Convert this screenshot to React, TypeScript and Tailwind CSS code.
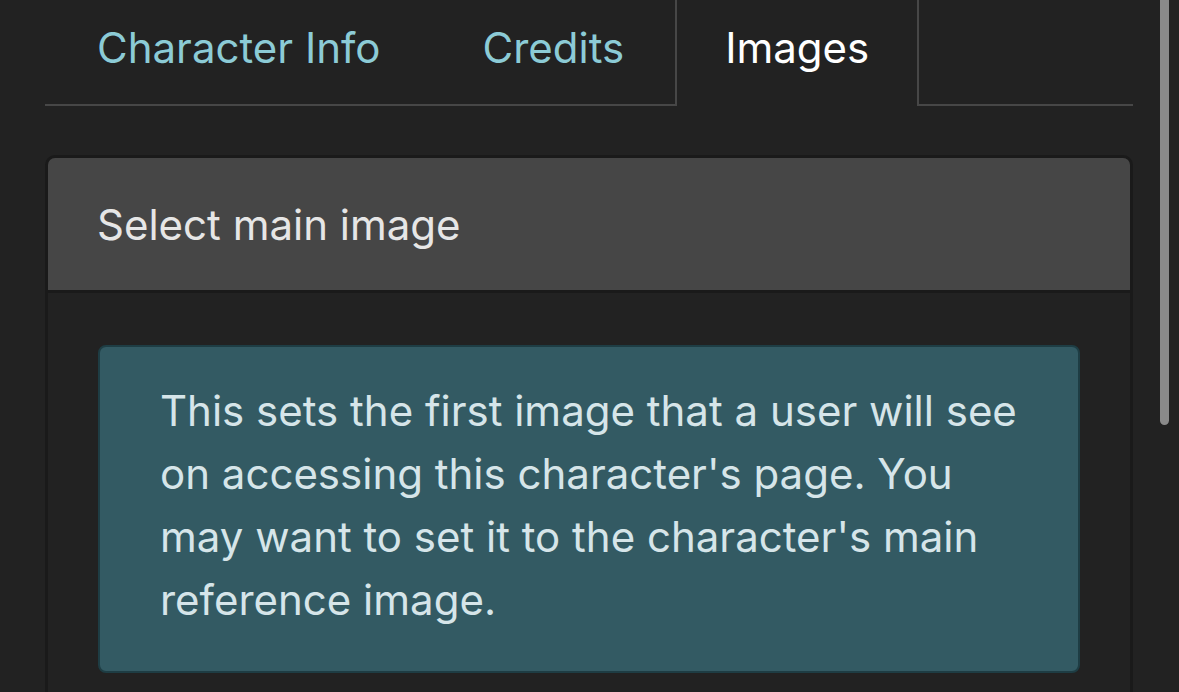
export default function App() {
  const font = { fontFamily: "Inter, 'Noto Sans', sans-serif" };
  return (
    <div className="relative w-[1179px] h-[692px] overflow-hidden bg-[#222222]" style={font}>
      <div className="pl-[45px] pr-[46px]">
        <div className="flex items-end h-[106px] border-b-2 border-[#474747]">
          <div className="pl-[52px] pr-[51px] h-[104px] flex items-start pt-[20px] text-[42px] leading-[56px] text-[#8ccbd6]">Character Info</div>
          <div className="pl-[51px] pr-[51px] h-[104px] flex items-start pt-[20px] text-[42px] leading-[56px] text-[#8ccbd6]">Credits</div>
          <div className="relative px-[48px] h-[106px] -mb-[2px] flex items-start pt-[20px] text-[42px] leading-[56px] text-white border-x-2 border-[#474747] bg-[#222222]">Images</div>
        </div>
        <div className="mt-[49px] rounded-[10px] border-[3px] border-[#1a1a1a] overflow-hidden">
          <div className="h-[135px] bg-[#464646] border-b-[3px] border-[#1a1a1a] pl-[49px] flex items-center text-[42px] text-[#e6e6e6]">Select main image</div>
          <div className="px-[50px] pt-[52px] pb-[60px]">
            <div className="rounded-[8px] border-2 border-[#1e3d44] bg-[#335a63] pl-[60px] pr-[56px] pt-[32px] pb-[40px] text-[42px] leading-[63px] text-[#d6e5e9]">
              This sets the first image that a user will see on accessing this character's page. You may want to set it to the character's main reference image.
            </div>
          </div>
        </div>
      </div>
      <div className="absolute left-[1160px] top-0 w-[9px] h-[425px] rounded-b-full bg-[#8a8a8a]" />
    </div>
  );
}
